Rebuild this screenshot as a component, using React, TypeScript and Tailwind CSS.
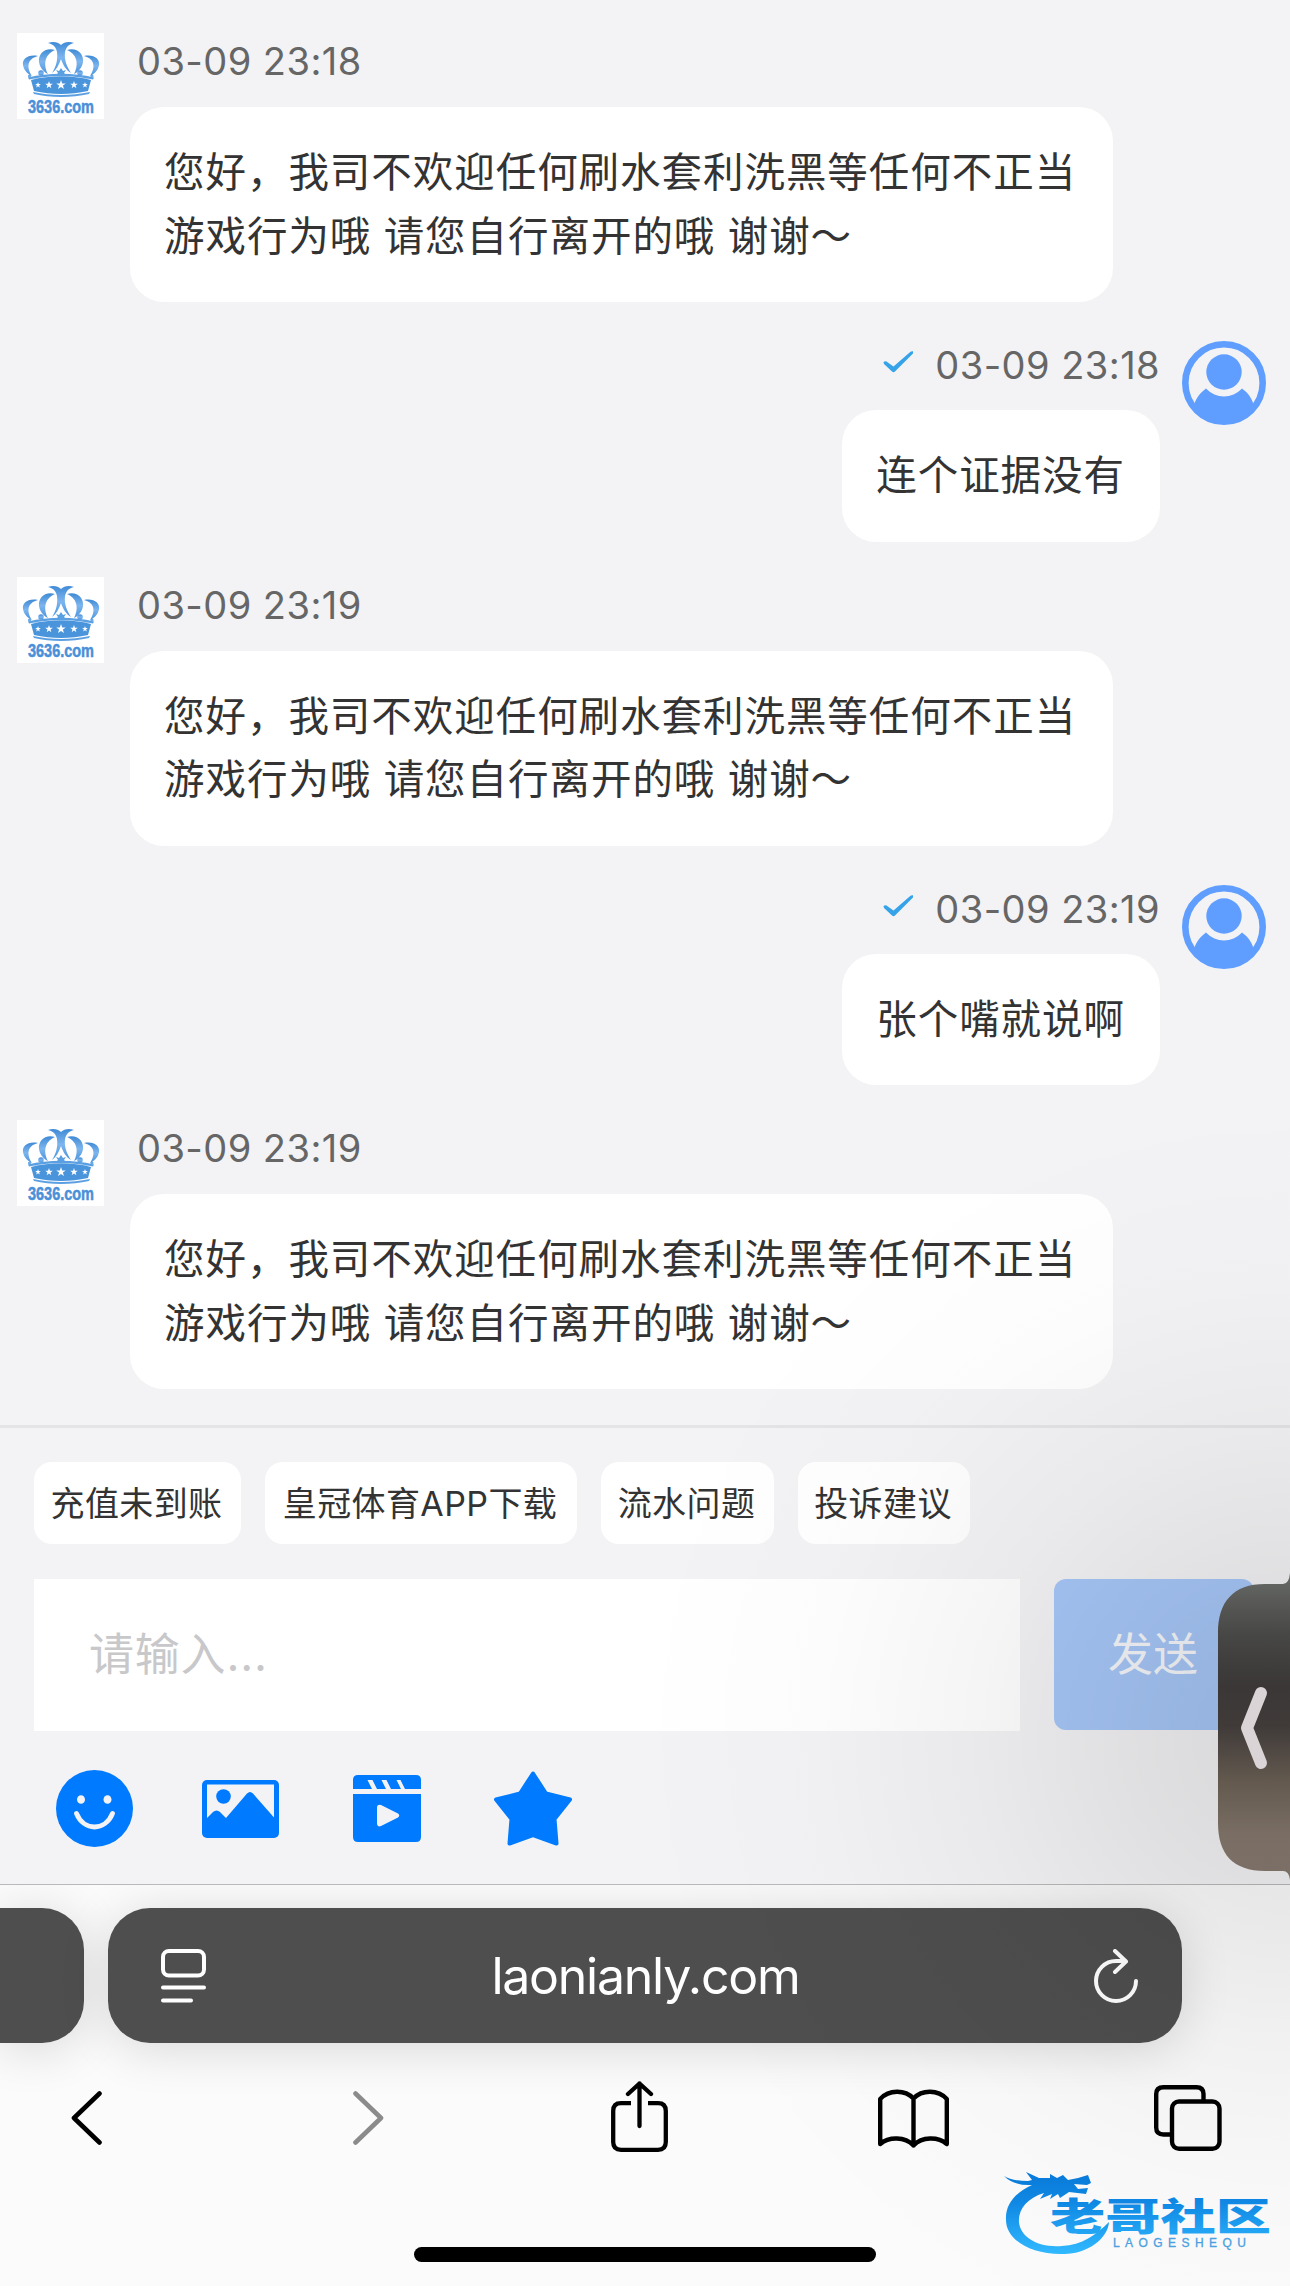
import type { ReactNode } from 'react';

interface Message {
  from: 'agent' | 'user';
  time: string;
  text: string;
}

const GREETING = '您好，我司不欢迎任何刷水套利洗黑等任何不正当游戏行为哦 请您自行离开的哦 谢谢～';

const messages: Message[] = [
  { from: 'agent', time: '03-09 23:18', text: GREETING },
  { from: 'user', time: '03-09 23:18', text: '连个证据没有' },
  { from: 'agent', time: '03-09 23:19', text: GREETING },
  { from: 'user', time: '03-09 23:19', text: '张个嘴就说啊' },
  { from: 'agent', time: '03-09 23:19', text: GREETING },
];

const quickReplies = [
  { label: '充值未到账', width: 'w-[207px]' },
  { label: '皇冠体育APP下载', width: 'w-[312px]' },
  { label: '流水问题', width: 'w-[173px]' },
  { label: '投诉建议', width: 'w-[172px]' },
];

function CrownAvatar() {
  return (
    <svg width="87" height="86" viewBox="0 0 87 86" className="shrink-0 overflow-visible">
      <defs>
        <linearGradient id="crown" x1="0" y1="0" x2="0" y2="1">
          <stop offset="0" stopColor="#3f8ad6" />
          <stop offset="0.5" stopColor="#7db5ee" />
          <stop offset="1" stopColor="#4a93dc" />
        </linearGradient>
      </defs>
      <rect width="87" height="86" fill="#fff" />
      <g fill="url(#crown)">
        <path d="M31 10C36 8 41 9 44 12C47 9 52 8 57 10C52 11 49 14 48 19C47 27 50 34 54 40C49 37 46 32 44 26C42 32 39 37 35 40C39 34 41 27 40 19C39 14 36 11 31 10Z" />
        <path d="M38 17C28 14 21 21 22 29C23 35 27 39 31 41C27 34 26 22 38 17Z" />
        <path d="M50 17C60 14 67 21 66 29C65 35 61 39 57 41C61 34 62 22 50 17Z" />
        <path d="M21 23C11 21 5 26 6 32C7 38 11 41 15 43C10 36 9 26 21 23Z" />
        <path d="M67 23C77 21 83 26 82 32C81 38 77 41 73 43C78 36 79 26 67 23Z" />
        <circle cx="24" cy="40" r="2.800" />
        <circle cx="63" cy="40" r="2.800" />
        <circle cx="12.500" cy="43" r="1.600" />
        <circle cx="75" cy="43" r="1.600" />
      </g>
      <g fill="#5a9fe2">
        <path d="M44 35l2 3 3-1-2 3 2 2-3-1-2 2-2-2-3 1 2-2-2-3 3 1Z" />
        <path d="M14 47C33 42 55 42 74 47L71 58C53 62 35 62 17 58Z" fill="#4a94dc" />
        <path d="M11 44.500C32 39.500 56 39.500 77 44.500L76 46.500C55 41.800 33 41.800 12 46.500Z" />
        <path d="M16 59C34 63 54 63 73 59L72 61C54 65 34 65 17 61Z" />
      </g>
      <g fill="#fff">
        {[[21, 52, 3], [32, 52, 4], [44, 52, 5], [57, 52, 4], [68, 52, 3]].map(([x, y, r]) => (
          <path
            key={x}
            transform={`translate(${x} ${y}) scale(${r / 10})`}
            d="M0-10L2.400-3.200L9.500-3.100L3.800 1.200L5.900 8.100L0 4L-5.900 8.100L-3.800 1.200L-9.500-3.100L-2.400-3.200Z"
          />
        ))}
      </g>
      <text
        x="44"
        y="80"
        textAnchor="middle"
        textLength="66"
        lengthAdjust="spacingAndGlyphs"
        fontFamily="'Liberation Sans', sans-serif"
        fontWeight="700"
        fontSize="18"
        fill="#4a90d9"
        stroke="#4a90d9"
        strokeWidth="0.500"
      >
        3636.com
      </text>
    </svg>
  );
}

function UserAvatar() {
  return (
    <svg width="84" height="84" viewBox="0 0 84 84" className="shrink-0">
      <circle cx="42" cy="42" r="38.700" fill="none" stroke="#5f9eff" strokeWidth="6.600" />
      <circle cx="42" cy="31" r="17.700" fill="#5f9eff" />
      <path d="M24 47.500C18 52 14 57 12.500 63C18 76 30 82 42 82S66 76 71.500 63C69 56 66 52 60 47.500C50 58 34 58 24 47.500Z" fill="#5f9eff" />
    </svg>
  );
}

function Bubble({ children }: { children: ReactNode }) {
  return (
    <div className="rounded-[34px] bg-white py-[34px] text-[40.500px] leading-[63.500px] tracking-[0.960px] text-[#333] pr-[35px] pl-[34px]">
      {children}
    </div>
  );
}

function MessageRow({ message }: { message: Message }) {
  if (message.from === 'agent') {
    return (
      <div className="flex h-[308px] items-start pl-[17px]">
        <CrownAvatar />
        <div className="ml-[26px] flex w-[983px] flex-col">
          <div className="h-[74px] pt-[3px] pl-[7px] text-[38px] leading-[50px] tracking-[0.450px] text-[#666]">{message.time}</div>
          <Bubble>{message.text}</Bubble>
        </div>
      </div>
    );
  }

  return (
    <div className="flex h-[235.500px] items-start justify-end pr-6">
      <div className="flex flex-col items-end">
        <div className="flex h-[69px] items-start text-[38px] leading-[48px] tracking-[0.450px] text-[#666]">
          <svg width="30" height="22" viewBox="0 0 30 22" className="mt-[10px] mr-[22px]">
            <path d="M0.500 11.500Q1.500 9.500 3.500 10.500L10.500 15.500L27.500 0.800Q28.500 0 30 0.300V2.500L12 20.500Q10.500 22 9 20.500L1 13Z" fill="#36a3e9" />
          </svg>
          {message.time}
        </div>
        <Bubble>{message.text}</Bubble>
      </div>
      <div className="ml-[22px]">
        <UserAvatar />
      </div>
    </div>
  );
}

function ToolIcons() {
  return (
    <div className="flex h-[77px] items-center pl-[56px]">
      <svg width="77" height="77" viewBox="0 0 77 77">
        <circle cx="38.500" cy="38.500" r="38.500" fill="#007aff" />
        <ellipse cx="25" cy="29.500" rx="4" ry="4.300" fill="#f3f3f5" />
        <ellipse cx="51.500" cy="29.500" rx="4" ry="4.300" fill="#f3f3f5" />
        <path d="M20.500 43.500C24 52 31 57 38.500 57S53 52 56.500 43.500" fill="none" stroke="#f3f3f5" strokeWidth="4.800" strokeLinecap="round" />
      </svg>
      <svg width="77" height="58" viewBox="0 0 77 58" className="ml-[69px]">
        <rect width="77" height="58" rx="5" fill="#007aff" />
        <path d="M5 4.500H72V37.500L51 13.500Q48 10.500 45 13.500L24 38L18 32Q14.500 29 11 32L5 38Z" fill="#f3f3f5" />
        <circle cx="21.500" cy="16.500" r="7.300" fill="#007aff" />
      </svg>
      <svg width="68" height="67" viewBox="0 0 68 67" className="ml-[74px]">
        <path d="M5 0H63Q68 0 68 5V14H52L47.500 5H43.500L48 14H38L33.500 5H28.500L33 14H24L19.500 5H14.500L19 14H0V5Q0 0 5 0Z" fill="#007aff" />
        <path fillRule="evenodd" d="M0 19H68V62Q68 67 63 67H5Q0 67 0 62ZM24 32V49Q24.500 52.500 28 51L45 42.500Q47.500 40.500 45 38.500L28 30Q24.500 29 24 32Z" fill="#007aff" />
      </svg>
      <svg width="78" height="75" viewBox="0 0 78 75" className="ml-[73px]">
        <path d="M39 2.500L52 22.500L76 28.500L60.500 48L62.500 72.500L39 64L15.500 72.500L17.500 48L2 28.500L26 22.500Z" fill="#007aff" stroke="#007aff" strokeWidth="4" strokeLinejoin="round" />
      </svg>
    </div>
  );
}

function AddressBar() {
  return (
    <div className="flex h-[135px] gap-6">
      <div className="w-[84px] rounded-r-[42px] bg-[#4e4e4e] shadow-[0_6px_50px_rgba(0,0,0,0.14)]" />
      <div className="flex w-[1074px] items-center justify-between rounded-[42px] bg-[#4e4e4e] pr-[44px] pl-[53px] text-white shadow-[0_6px_50px_rgba(0,0,0,0.14)]">
        <svg width="45" height="54" viewBox="0 0 45 54" fill="none" stroke="currentColor" strokeWidth="4" strokeLinecap="round">
          <rect x="2" y="2" width="41" height="24.500" rx="6" />
          <path d="M2 38.500H43M2 51.500H30" />
        </svg>
        <span className="mr-[9px] text-[50px] leading-[60px] tracking-[-1.250px]">laonianly.com</span>
        <svg width="44" height="54" viewBox="0 0 44 54" fill="none" stroke="currentColor" strokeWidth="4" strokeLinecap="round" strokeLinejoin="round">
          <path d="M42 32A20 20 0 1 1 22 12H31" />
          <path d="M21 2L32 12.500L21 23" />
        </svg>
      </div>
    </div>
  );
}

function BrowserNav() {
  return (
    <div className="mt-[38px] flex h-[71px] items-center pl-[71px] text-black">
      <svg width="31" height="54" viewBox="0 0 31 54" fill="none" stroke="currentColor" strokeWidth="4.600" strokeLinecap="round" strokeLinejoin="round" className="mt-[3px]">
        <path d="M28.500 2.500L3 27L28.500 51.500" />
      </svg>
      <svg width="31" height="54" viewBox="0 0 31 54" fill="none" stroke="#8b8b8b" strokeWidth="4.600" strokeLinecap="round" strokeLinejoin="round" className="mt-[3px] ml-[251px]">
        <path d="M2.500 2.500L28 27L2.500 51.500" />
      </svg>
      <svg width="57" height="71" viewBox="0 0 57 71" fill="none" stroke="currentColor" strokeWidth="4.300" strokeLinecap="round" strokeLinejoin="round" className="ml-[227px]">
        <path d="M20 22.200H10Q2.200 22.200 2.200 30V61Q2.200 68.800 10 68.800H47Q54.800 68.800 54.800 61V30Q54.800 22.200 47 22.200H37" strokeLinecap="butt" />
        <path d="M28.500 2.500V45M17 13L28.500 2.500L40 13" />
      </svg>
      <svg width="71" height="59" viewBox="0 0 71 59" fill="none" stroke="currentColor" strokeWidth="4.400" strokeLinecap="round" strokeLinejoin="round" className="mt-[3px] ml-[210px]">
        <path d="M35.500 9.500C27 0.500 11 0.500 2.200 10V55C11 47.500 27 47.500 35.500 56.500C44 47.500 60 47.500 68.800 55V10C60 0.500 44 0.500 35.500 9.500ZM35.500 9.500V56.500" />
      </svg>
      <svg width="68" height="66" viewBox="0 0 68 66" fill="none" stroke="currentColor" strokeWidth="4.400" className="mt-[3px] ml-[205px]">
        <path d="M49.500 15V9Q49.500 2.200 42.500 2.200H9.500Q2.200 2.200 2.200 9V42.500Q2.200 49.500 9.500 49.500H16" />
        <rect x="18" y="16.500" width="47.500" height="47.300" rx="7" />
      </svg>
    </div>
  );
}

// assistive panel tucked into the right screen edge
function SideHandle() {
  return (
    <svg width="72" height="310" viewBox="0 0 72 310" className="absolute top-[1573px] right-0">
      <defs>
        <linearGradient id="handle" x1="0" y1="0" x2="0" y2="1">
          <stop offset="0.030" stopColor="#636563" />
          <stop offset="0.200" stopColor="#474745" />
          <stop offset="0.370" stopColor="#3a3736" />
          <stop offset="0.500" stopColor="#403b39" />
          <stop offset="0.680" stopColor="#63594f" />
          <stop offset="0.850" stopColor="#7a6e64" />
          <stop offset="1" stopColor="#7b6f67" />
        </linearGradient>
      </defs>
      <path d="M72 0Q71 11 65 11H47C15 11 0 29 0 60V250C0 281 15 298 47 298H65Q71 298 72 307Z" fill="url(#handle)" />
      <path d="M43 120L29 155L43 190" fill="none" stroke="#dad4d7" strokeWidth="12" strokeLinecap="round" strokeLinejoin="round" />
    </svg>
  );
}

function Watermark() {
  return (
    <svg width="270" height="96" viewBox="0 0 270 96" className="absolute top-[2162px] left-[1002px]">
      <defs>
        <linearGradient id="mark" gradientUnits="userSpaceOnUse" x1="0" y1="8" x2="0" y2="92">
          <stop offset="0" stopColor="#0878d8" />
          <stop offset="0.400" stopColor="#1089e4" />
          <stop offset="1" stopColor="#31b9ff" />
        </linearGradient>
      </defs>
      <g fill="url(#mark)">
        <path d="M2 14Q10 19 26 19L30 18L24 10L37 16L48 16L48 12L55 16L61 13L66 18L76 16L86 13L89 21L85 23L72 22L76 27L86 26L84 32L67 30L58 36L56 32L48 37L50 32L38 37L42 31C25 36 16 48 17 60C18 75 36 86 60 84C80 83 94 73 107 60C106 76 86 92 62 92C29 93 4 78 4 58C3 42 14 30 30 23Q12 24 2 14Z" />
        <text
          x="48"
          y="67.500"
          textLength="221"
          lengthAdjust="spacingAndGlyphs"
          fontFamily="'Noto Sans CJK SC', sans-serif"
          fontWeight="900"
          fontSize="38"
        >
          老哥社区
        </text>
        <text x="111" y="84.500" textLength="133" fontFamily="'Liberation Sans', sans-serif" fontSize="12" fill="#4aa0e0" stroke="#4aa0e0" strokeWidth="0.300">
          LAOGESHEQU
        </text>
      </g>
    </svg>
  );
}

export default function App() {
  return (
    <div className="relative flex h-[2286px] w-[1290px] flex-col overflow-hidden bg-[#f3f3f5] font-['Inter','Noto_Sans_CJK_SC',sans-serif]">
      <main className="h-[1425px] pt-[33px]">
        {messages.map((message, i) => (
          <MessageRow key={i} message={message} />
        ))}
      </main>

      <section className="h-[459px] border-t-[3px] border-[#e4e4e6] pt-[34px]">
        <div className="flex gap-6 pl-[34px]">
          {quickReplies.map(({ label, width }) => (
            <button key={label} className={`${width} h-[82px] rounded-[18px] bg-white pr-[2px] text-[34px] tracking-[0.400px] whitespace-nowrap text-[#333]`}>
              {label}
            </button>
          ))}
        </div>
        <div className="mt-[35px] mb-[39px] flex gap-[34px] pl-[34px]">
          <div className="flex h-[152px] w-[986px] items-center bg-white pl-[55px] text-[45px] tracking-[0.800px] text-[#c8c8ca]">
            请输入...
          </div>
          <button className="h-[151px] w-[200px] rounded-[12px] bg-[#a7c7f8] pr-[2px] text-[45px] text-[#f6f8fc]">发送</button>
        </div>
        <ToolIcons />
      </section>

      <footer className="h-[402px] overflow-hidden border-t border-[#b9b9bb] bg-[#fbfbfb] pt-[23px]">
        <AddressBar />
        <BrowserNav />
        <div className="mx-auto mt-[95px] h-[15px] w-[462px] rounded-full bg-black" />
      </footer>

      {/* soft shadow cast by the side handle */}
      <div className="pointer-events-none absolute inset-0 bg-[radial-gradient(ellipse_660px_640px_at_1290px_1738px,rgba(0,0,0,0.115)_0%,rgba(0,0,0,0.080)_25%,rgba(0,0,0,0.038)_48%,rgba(0,0,0,0.012)_72%,transparent_100%)]" />
      <SideHandle />
      <Watermark />
    </div>
  );
}
